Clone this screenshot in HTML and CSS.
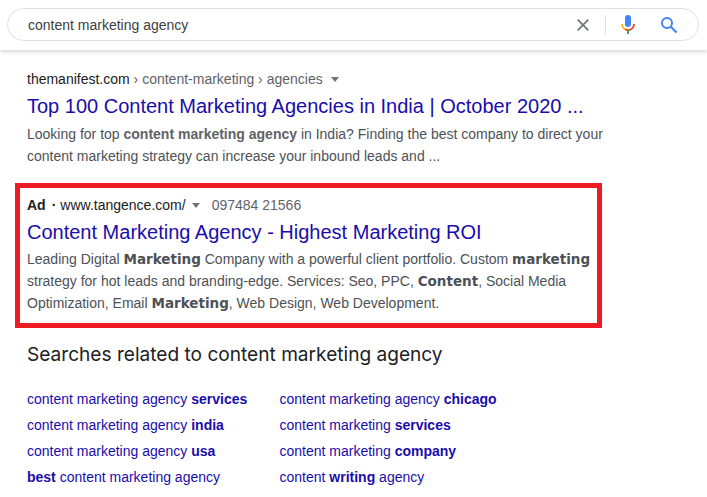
FILE: index.html
```html
<!DOCTYPE html>
<html lang="en">
<head>
<meta charset="utf-8">
<title>content marketing agency</title>
<link rel="stylesheet" href="styles.css">
</head>
<body>
<header class="top">
  <div class="search">
    <span class="query">content marketing agency</span>
    <svg class="ic-x" width="12" height="12" viewBox="0 0 12 12"><path d="M.7 .7L11.3 11.3M11.3 .7L.7 11.3" stroke="#70757a" stroke-width="1.7" fill="none"/></svg>
    <span class="sep"></span>
    <svg class="ic-mic" width="14" height="20" viewBox="0 0 14 20">
      <rect x="4" y="0" width="6" height="12" rx="3" fill="#4285f4"/>
      <path d="M1 9a6 6 0 0 0 3 5.2" stroke="#fbbc04" stroke-width="1.8" fill="none"/>
      <path d="M13 9a6 6 0 0 1-9 5.2" stroke="#ea4335" stroke-width="1.8" fill="none"/>
      <rect x="6" y="15" width="2" height="4" fill="#34a853"/>
    </svg>
    <svg class="ic-search" width="18" height="18" viewBox="0 0 18 18"><circle cx="7" cy="7" r="5" stroke="#4285f4" stroke-width="2" fill="none"/><path d="M10.8 10.8L16.5 16.5" stroke="#4285f4" stroke-width="2.2" fill="none"/></svg>
  </div>
</header>
<main class="main">
  <section class="result">
    <div class="cite"><span class="dark">themanifest.com</span> › content-marketing › agencies <span class="caret"></span></div>
    <h3 class="title">Top 100 Content Marketing Agencies in India | October 2020 ...</h3>
    <p class="snippet">Looking for top <b>content marketing agency</b> in India? Finding the best company to direct your<br>content marketing strategy can increase your inbound leads and ...</p>
  </section>
  <section class="ad">
    <div class="cite adline"><b class="adtag">Ad</b><span class="dot">·</span><span class="dark">www.tangence.com/</span><span class="caret"></span><span class="phone">097484 21566</span></div>
    <h3 class="title">Content Marketing Agency - Highest Marketing ROI</h3>
    <p class="snippet adsnip">Leading Digital <b>Marketing</b> Company with a powerful client portfolio. Custom <b>marketing</b><br>strategy for hot leads and branding-edge. Services: Seo, PPC, <b>Content</b>, Social Media<br>Optimization, Email <b>Marketing</b>, Web Design, Web Development.</p>
  </section>
  <h2 class="related">Searches related to content marketing agency</h2>
  <div class="links">
    <a>content marketing agency <b>services</b></a><a>content marketing agency <b>chicago</b></a>
    <a>content marketing agency <b>india</b></a><a>content marketing <b>services</b></a>
    <a>content marketing agency <b>usa</b></a><a>content marketing <b>company</b></a>
    <a><b>best</b> content marketing agency</a><a>content <b>writing</b> agency</a>
  </div>
</main>
</body>
</html>
```
FILE: styles.css
```css
* { box-sizing: border-box; }
html, body { margin: 0; padding: 0; background: #fff; }
body { height: 497px; overflow: hidden; font-family: "Liberation Sans", Arial, sans-serif; color: #4d5156; }
.top { height: 50px; padding: 8px 8px 0 7px; box-shadow: 0 2px 4px rgba(0,0,0,.16); }
.search { height: 33px; border: 1px solid #dfe1e5; border-radius: 17px; display: flex; align-items: center; padding-left: 20px; background: #fff; }
.query { font-size: 14px; color: #3c4043; flex: 1; }
.ic-x { margin-right: 16px; }
.sep { width: 1px; height: 20px; background: #dfe1e5; margin-right: 15px; }
.ic-mic { margin-right: 25px; }
.ic-search { margin-right: 20px; }
.main { padding: 20px 0 0 27px; }
.cite { font-size: 14px; line-height: 18px; color: #5f6368; }
.dark { color: #202124; }
.caret { display: inline-block; width: 0; height: 0; border-left: 4px solid transparent; border-right: 4px solid transparent; border-top: 5px solid #70757a; margin-left: 4px; vertical-align: 2px; }
.title { margin: 0; font-size: 20px; font-weight: 400; line-height: 26px; color: #1a0dab; white-space: nowrap; }
.result .title { margin-top: 5px; }
.snippet { margin: 4px 0 0; font-size: 14px; line-height: 22px; color: #4d5156; white-space: nowrap; }
.snippet b { color: #5f6368; }
.ad { width: 587px; height: 145px; margin: 16px 0 0 -12px; border: 5px solid #ed1c24; padding: 8px 0 0 7px; }
.adline { display: flex; align-items: center; }
.adtag { color: #202124; }
.dot { margin: 0 4px 0 6px; color: #202124; font-weight: 700; }
.adline .caret { margin-left: 6px; vertical-align: 0; }
.phone { margin-left: 12px; color: #5f6368; }
.ad .title { margin-top: 5px; }
.adsnip { margin-top: 3px; }
.adsnip b { color: #4d5156; font-family: "DejaVu Sans", sans-serif; font-size: 13.5px; }
.related { margin: 14px 0 0; font-family: "Inter", "Noto Sans", sans-serif; font-size: 19.1px; font-weight: 400; line-height: 24px; color: #202124; }
.links { margin-top: 20px; display: grid; grid-template-columns: 252.5px max-content; grid-auto-rows: 26px; font-size: 14px; line-height: 26px; color: #1a0dab; }
.links b { font-weight: 700; }
```
